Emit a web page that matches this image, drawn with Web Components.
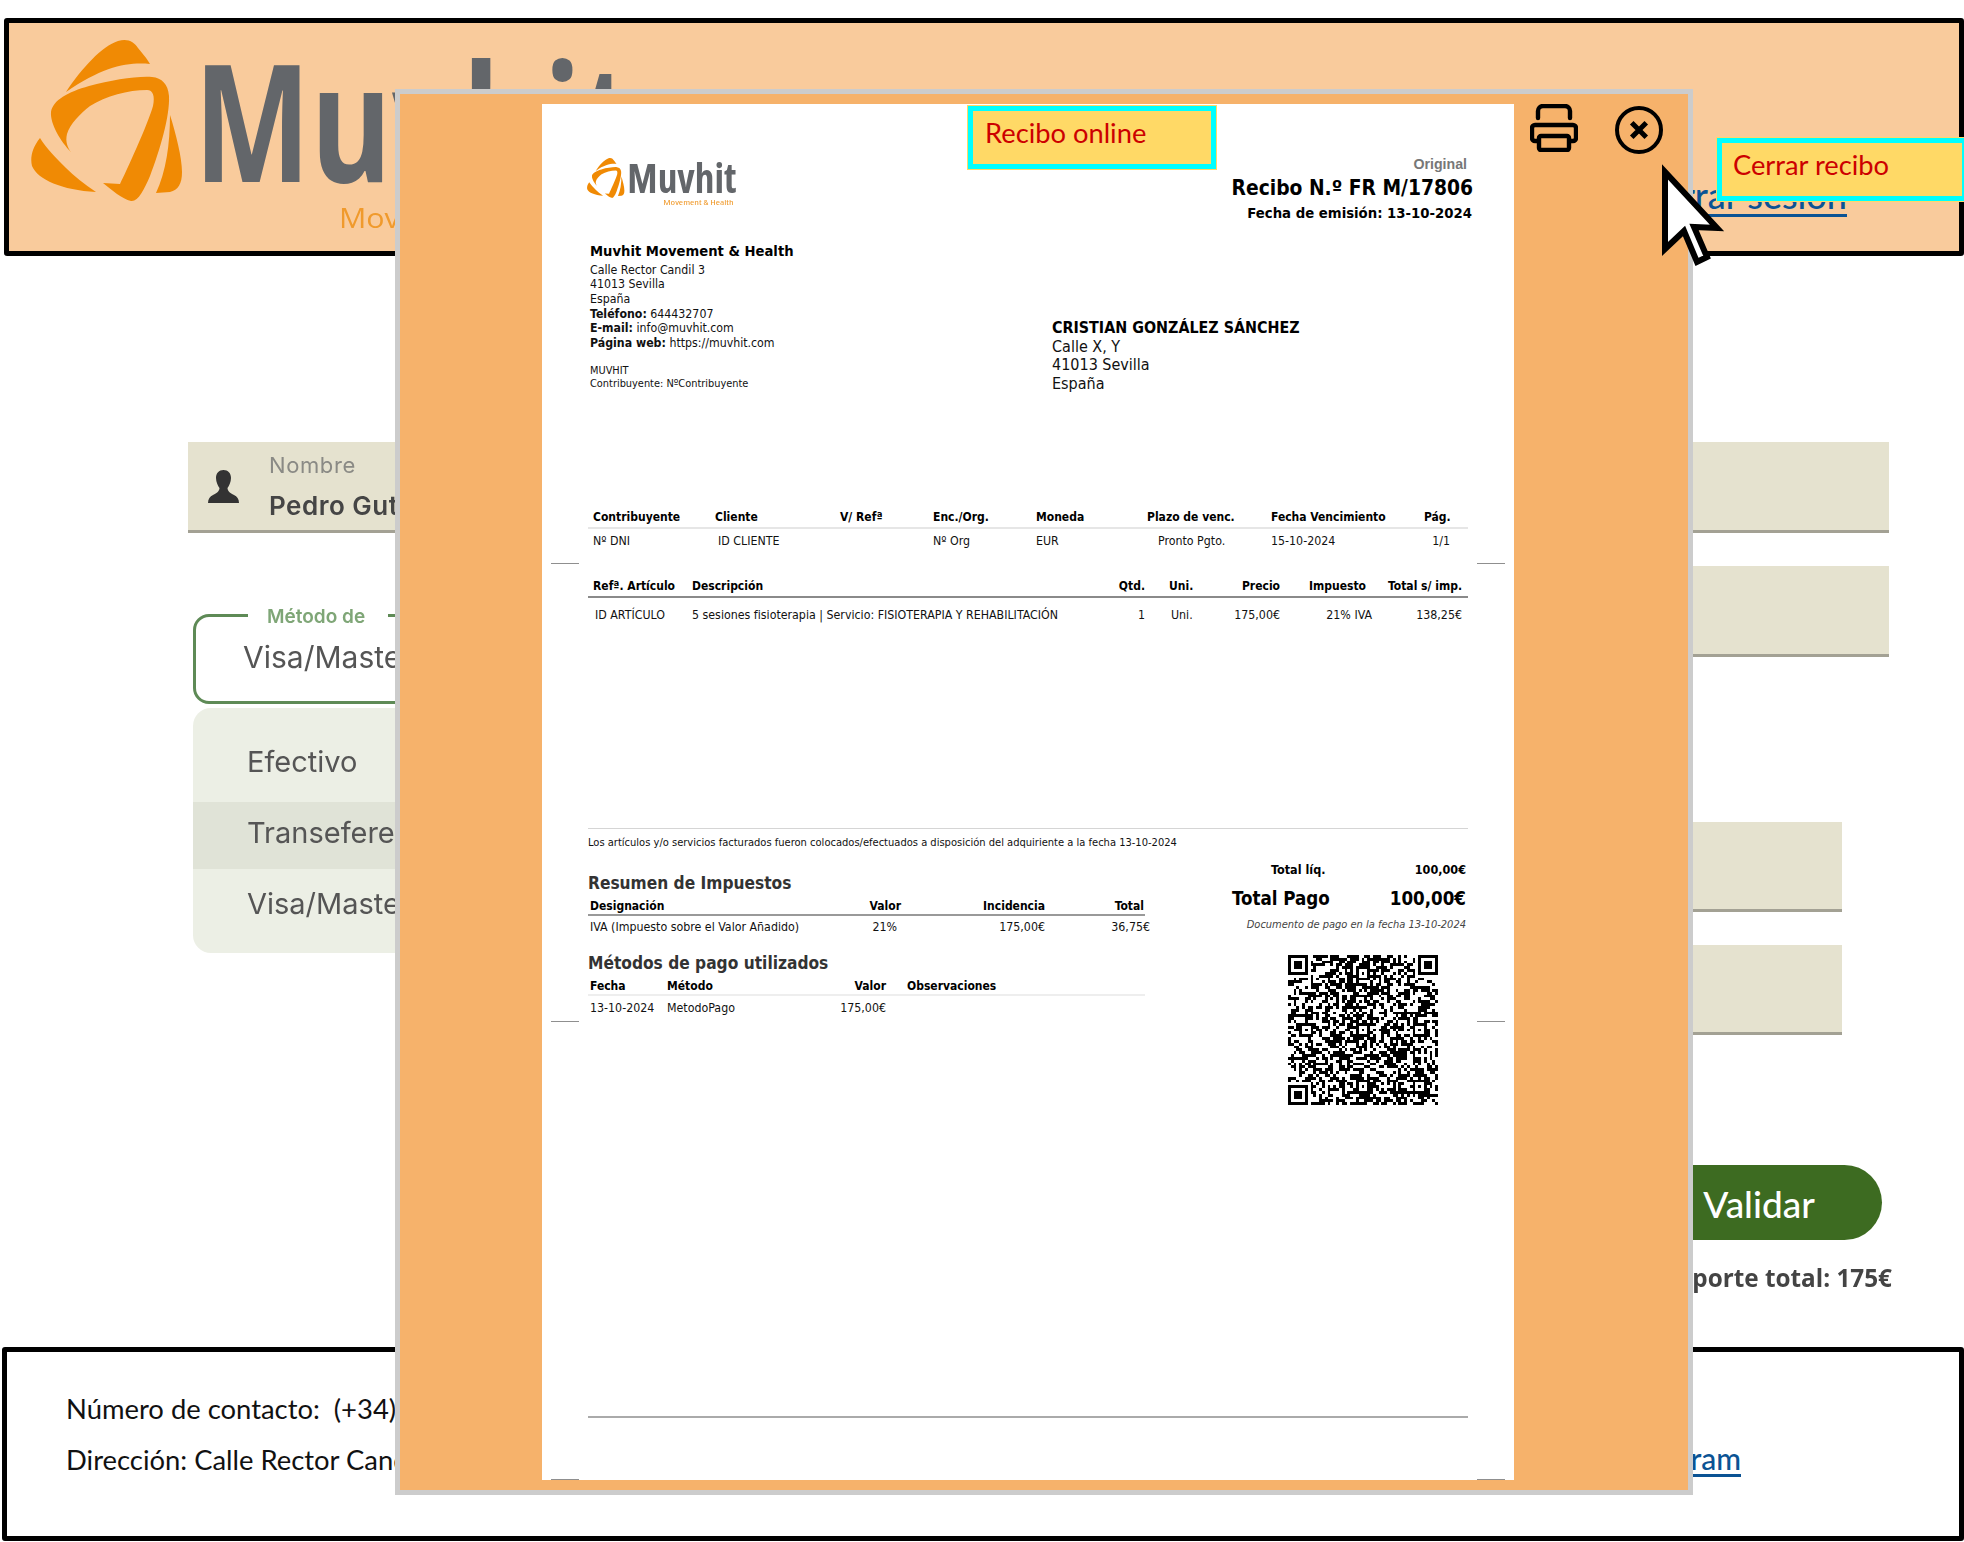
<!DOCTYPE html>
<html lang="es"><head><meta charset="utf-8"><title>Recibo online</title>
<style>html,body{margin:0;padding:0;background:#fff}body{width:1964px;height:1542px;overflow:hidden;font-family:"Lato",sans-serif}</style>
</head><body>
<app-page></app-page>
<script>
function def(name, html, init){
  customElements.define(name, class extends HTMLElement{
    constructor(){super();const r=this.attachShadow({mode:'open'});r.innerHTML=html;if(init)init(r,this);}
  });
}
def('brand-logo',`<style>:host{display:block;line-height:0}svg{display:block;overflow:visible}</style>
<svg part="svg" viewBox="31 40 600 190">
<g fill="#F08A04">
<path d="M66 92C82 68 102 46 118 41C128 38 134 42 138 48C143 54 148 60 150 64C128 62 104 66 66 92Z"/>
<path d="M71 152C61 142 50 124 51 112C53 100 68 92 89 86C112 80 136 76 152 77C162 78 168 84 169 96C170 116 160 150 150 176C144 190 138 202 131 201C122 199 112 190 103 183L120 184C126 172 148 124 153 106C155 96 153 90 147 90C128 90 106 96 90 106C80 114 70 124 67 134C65 142 68 148 71 152Z"/>
<path d="M40 138C32 148 30 158 32 166C38 180 62 190 96 192C84 184 74 176 66 168C56 158 46 148 40 138Z"/>
<path d="M170 115C176 134 182 158 182 172C182 184 178 190 170 192L156 193C166 172 170 144 170 115Z"/>
</g>
<text x="194" y="182" font-family="Open Sans" font-weight="700" font-size="164" textLength="441" lengthAdjust="spacingAndGlyphs" fill="#63666A">Muvhit</text>
<text x="339" y="228" font-family="Open Sans" font-size="28" textLength="284" lengthAdjust="spacingAndGlyphs" fill="#F09A2C">Movement &amp; Health</text>
</svg>`);

def('site-header',`<style>
:host{display:flex;box-sizing:border-box;margin:18px 0 0 4px;height:238px;background:#F9CB9C;border:5px solid #000;border-radius:3px;align-items:flex-start}
brand-logo{width:600px;margin:17px 0 0 22px;filter:blur(.6px)}
a{margin:149px 112px 0 auto;font:500 36px/46px "Lato",sans-serif;color:#0B5394;text-decoration:underline;text-underline-offset:5px}
</style><brand-logo></brand-logo><a>Cerrar sesión</a>`);

def('form-field',`<style>
:host{display:flex;box-sizing:border-box;height:91px;background:#E5E2CF;border-bottom:3px solid #A3A194;align-items:center;filter:blur(.4px)}
</style><slot></slot>`);

def('name-value',`<style>
:host{display:flex;align-items:center;width:100%;font-family:"Inter",sans-serif}
svg{margin-left:20px;width:31px;height:33px;flex:none}
div{margin-left:30px}
p{margin:0}
.l{font:400 22px/24px "Inter",sans-serif;letter-spacing:.6px;color:#8a8a85;margin-top:1px}
.v{font:600 26px/30px "Inter",sans-serif;letter-spacing:.5px;color:#454545;margin-top:14px;white-space:nowrap}
</style>
<svg viewBox="0 0 31 33"><path fill="#333" d="M15.5 0C20 0 23 3 23 8C23 12 21 16 19.5 18C19.5 21 22 23 26 25C29 26.5 31 29 31 33H0C0 29 2 26.5 5 25C9 23 11.5 21 11.5 18C10 16 8 12 8 8C8 3 11 0 15.5 0Z"/></svg>
<div><p class="l"><slot name="label"></slot></p><p class="v"><slot name="value"></slot></p></div>`);

def('method-select',`<style>
:host{display:block;position:relative;margin:81px 0 0 5px;font-family:"Inter",sans-serif;filter:blur(.4px)}
.box{box-sizing:border-box;height:90px;border:3px solid #5E8A56;border-radius:16px;display:flex;align-items:center;padding:0 0 4px 47px;font:400 30px/36px "Inter",sans-serif;color:#555;background:#fff}
.label{position:absolute;left:55px;top:-6px;background:#fff;padding:0 23px 0 19px;font:600 19px/18px "Inter",sans-serif;color:#7FA677;width:98px;white-space:nowrap}
.menu{margin-top:4px;background:#ECEFE5;border-radius:18px;height:245px;box-sizing:border-box;font:400 29px/36px "Inter",sans-serif;color:#555}
.it{display:flex;align-items:center;padding-left:54px;box-sizing:border-box}
.a{height:94px;padding-top:13px}
.s{height:67px;background:#E0E3D7;padding-bottom:6px}
.c{height:64px;padding-top:5px}
</style>
<div class="box">Visa/Mastercard</div><div class="label">Método de</div>
<div class="menu"><div class="it a">Efectivo</div><div class="it s">Transeferencia</div><div class="it c">Visa/Mastercard</div></div>`);

def('primary-button',`<style>
:host{display:flex;box-sizing:border-box;align-items:center;justify-content:center;width:246px;height:75px;padding-top:2px;border-radius:38px;background:#3D6B21;color:#fff;font:500 37px/44px "Lato",sans-serif}
</style><slot></slot>`);

def('site-main',`<style>
:host{display:grid;grid-template-columns:872px 789px;column-gap:40px;box-sizing:border-box;height:1091px;padding:186px 0 0 188px}
.r{display:flex;flex-direction:column;align-items:flex-end}
.r form-field{width:100%}
.r .short{width:742px;margin-right:47px;height:90px}
primary-button{margin:130px 7px 0 0}
.t{margin:23px -3px 0 0;font:700 24.3px/30px "Open Sans",sans-serif;color:#444;filter:blur(.3px)}
</style>
<div class="l"><form-field><name-value><span slot="label">Nombre</span><span slot="value">Pedro Gutiérrez</span></name-value></form-field><method-select></method-select></div>
<div class="r"><form-field></form-field><form-field style="margin-top:33px"></form-field>
<form-field class="short" style="margin-top:165px"></form-field><form-field class="short" style="margin-top:33px"></form-field>
<primary-button>Validar</primary-button><div class="t">Importe total: 175€</div></div>`);

def('site-footer',`<style>
:host{display:flex;box-sizing:border-box;margin:0 0 0 2px;height:194px;background:#fff;border:5px solid #000;border-radius:3px;justify-content:space-between;color:#111}
.c{padding:31px 0 0 59px;font:400 27.4px/51px "Lato",sans-serif;white-space:pre}
a{margin:86px 218px 0 0;font:500 30px/40px "Lato",sans-serif;color:#0B5394;text-decoration:underline;text-underline-offset:4px}
</style><div class="c"><div>Número de contacto:  (+34) 644 43 27 07</div><div>Dirección: Calle Rector Candil 3</div></div><a>Instagram</a>`);

def('note-tip',`<style>
:host{display:block;position:absolute;box-sizing:border-box;background:#FFD966;border:5px solid #0ff;outline:1px solid #FFD966;color:#C00;font:400 27.3px/34px "Lato",sans-serif;white-space:nowrap;z-index:5}
</style><slot></slot>`);

def('qr-code',`<style>:host{display:block;width:150px;height:150px}svg{display:block;width:150px;height:150px}</style><svg viewBox="0 0 53 53" shape-rendering="crispEdges"><path id="p" fill="#000"/></svg>`,(r)=>{
  const N=53,g=[];let s=20241013;
  const rnd=()=>{s=(s+0x6D2B79F5)|0;let t=Math.imul(s^s>>>15,1|s);t=t+Math.imul(t^t>>>7,61|t)^t;return((t^t>>>14)>>>0)/4294967296};
  for(let y=0;y<N;y++){g[y]=[];for(let x=0;x<N;x++)g[y][x]=rnd()<.52?1:0}
  const pat=(cx,cy,o)=>{for(let y=-o-1;y<=o+1;y++)for(let x=-o-1;x<=o+1;x++){const X=cx+x,Y=cy+y;if(X<0||Y<0||X>=N||Y>=N)continue;const d=Math.max(Math.abs(x),Math.abs(y));
    g[Y][X]=o===3?(d===4?0:d===3?1:d===2?0:1):(d===3?g[Y][X]:d===2?1:d===1?0:1)}};
  [[3,3],[49,3],[3,49]].forEach(p=>pat(p[0],p[1],3));
  [[6,26],[26,6],[26,26],[46,26],[26,46],[46,46]].forEach(p=>pat(p[0],p[1],2));
  let d='';for(let y=0;y<N;y++)for(let x=0;x<N;x++)if(g[y][x])d+=`M${x} ${y}h1v1h-1z`;
  r.getElementById('p').setAttribute('d',d);
});

def('receipt-doc',`<style>
:host{display:block;position:relative;box-sizing:border-box;width:972px;height:1376px;background:#fff;flex:none;padding:51px 46px 0;color:#111;font:condensed 12.3px/20px "DejaVu Sans",sans-serif}
*{box-sizing:border-box}
b{font-weight:700}
.head{display:flex;justify-content:space-between;height:87px;margin-left:-1px}
brand-logo{width:148.6px;margin-top:3px;filter:blur(.3px)}
.ttl{text-align:right;margin-right:-5px}
.orig{font:700 14.2px/18px "Liberation Sans",sans-serif;color:#777;padding-right:6px}
.num{font:condensed 700 20.8px/30px "DejaVu Sans",sans-serif;color:#000}
.em{font:condensed 700 14.75px/20px "DejaVu Sans",sans-serif;color:#000;padding-right:1px}
.info{display:flex;height:264px;padding-left:2px}
.co{width:462px;font-size:12.25px;line-height:14.7px}
.co .n{font:condensed 700 14.65px/18px "DejaVu Sans",sans-serif;margin-bottom:2.6px;color:#000}
.co .t{margin-top:13px;font-size:10.9px;line-height:13.5px}
.cu{padding-top:77px;font:condensed 16px/18.7px "DejaVu Sans",sans-serif}
.cu b{font-size:15.9px;color:#000}
.g{display:grid;align-items:center;white-space:nowrap}
.g.h{font-weight:700;color:#000;font-size:12px}
.t1{grid-template-columns:122px 125px 93px 103px 111px 124px 153px 26px;padding-left:5px}
.t1.h{height:23px;border-bottom:2px solid #e6e6e6;line-height:22px}
.t1.v{height:23px}
.t2{grid-template-columns:99px 404px 49px 85px 50px 86px 96px;padding-left:5px}
.t2.h{margin-top:23px;height:23px;border-bottom:2px solid #8a8a8a}
.t2.v{margin-top:7px;height:20px}
.r{text-align:right}
.rule{margin-top:203px;border-top:1.5px solid #d5d5d5;padding-top:4px;font-size:11.05px;line-height:20px;height:25px;white-space:nowrap}
.bot{display:flex;justify-content:space-between;height:555px;margin-top:8px}
.lf{width:557px;padding-top:11px}
h3{margin:0;font:condensed 700 17.2px/22px "DejaVu Sans",sans-serif;color:#333}
.t3{grid-template-columns:250px 61px 144px 99px;padding-left:2px;width:557px;line-height:16px}
.t3.h{margin-top:4px;height:18px;border-bottom:2px solid #999}
.t3.v{margin-top:2px;height:18px}
.t4{grid-template-columns:77px 160px 59px 261px;padding-left:2px;width:557px;line-height:16px}
.t4.h{margin-top:4px;height:18px;border-bottom:2px solid #eee}
.t4.v{margin-top:3px;height:18px}
.ov{margin-right:-6px}
.rg{width:240px;margin-right:2px;position:relative;text-align:right;margin-top:-1px}
.tot{display:flex;justify-content:space-between;padding-left:45px;font-weight:700;color:#000;line-height:20px;font-size:12.5px}
.pg{display:flex;justify-content:space-between;padding-left:6px;font-weight:700;color:#000;margin-top:6px;font-size:18.6px;line-height:26px}
.doc{font-style:italic;color:#444;font-size:11px;line-height:18px;margin-top:4px;white-space:nowrap}
qr-code{margin:21px 0 0 62px}
.end{height:1.5px;background:#aaa}
.m{position:absolute;height:1px;width:28px;background:#8f8f8f}
.m.a{left:9px}.m.b{left:935px}
</style>
<div class="head"><brand-logo></brand-logo><div class="ttl"><div class="orig">Original</div><div class="num">Recibo N.º FR M/17806</div><div class="em">Fecha de emisión: 13-10-2024</div></div></div>
<div class="info"><div class="co"><div class="n">Muvhit Movement &amp; Health</div>Calle Rector Candil 3<br>41013 Sevilla<br>España<br><b>Teléfono:</b> 644432707<br><b>E-mail:</b> info@muvhit.com<br><b>Página web:</b> https://muvhit.com<div class="t">MUVHIT<br>Contribuyente: NºContribuyente</div></div>
<div class="cu"><b>CRISTIAN GONZÁLEZ SÁNCHEZ</b><br>Calle X, Y<br>41013 Sevilla<br>España</div></div>
<div class="g h t1"><span>Contribuyente</span><span>Cliente</span><span>V/ Refª</span><span>Enc./Org.</span><span>Moneda</span><span>Plazo de venc.</span><span>Fecha Vencimiento</span><span>Pág.</span></div>
<div class="g v t1"><span>Nº DNI</span><span style="padding-left:3px">ID CLIENTE</span><span></span><span>Nº Org</span><span>EUR</span><span style="padding-left:11px">Pronto Pgto.</span><span>15-10-2024</span><span class="r">1/1</span></div>
<div class="g h t2"><span>Refª. Artículo</span><span>Descripción</span><span class="r">Qtd.</span><span style="padding-left:24px">Uni.</span><span class="r">Precio</span><span class="r">Impuesto</span><span class="r">Total s/ imp.</span></div>
<div class="g t2 v"><span style="padding-left:2px">ID ARTÍCULO</span><span>5 sesiones fisioterapia | Servicio: FISIOTERAPIA Y REHABILITACIÓN</span><span class="r">1</span><span style="padding-left:26px">Uni.</span><span class="r">175,00€</span><span class="r ov">21% IVA</span><span class="r">138,25€</span></div>
<div class="rule">Los artículos y/o servicios facturados fueron colocados/efectuados a disposición del adquiriente a la fecha 13-10-2024</div>
<div class="bot"><div class="lf"><h3>Resumen de Impuestos</h3>
<div class="g h t3"><span>Designación</span><span class="r">Valor</span><span class="r">Incidencia</span><span class="r">Total</span></div>
<div class="g t3 v"><span>IVA (Impuesto sobre el Valor Añadido)</span><span class="r" style="padding-right:4px">21%</span><span class="r">175,00€</span><span class="r ov">36,75€</span></div>
<h3 style="margin-top:16px">Métodos de pago utilizados</h3>
<div class="g h t4"><span>Fecha</span><span>Método</span><span class="r">Valor</span><span style="padding-left:21px">Observaciones</span></div>
<div class="g t4 v"><span>13-10-2024</span><span>MetodoPago</span><span class="r">175,00€</span><span></span></div>
</div>
<div class="rg"><div class="tot"><span>Total líq.</span><span>100,00€</span></div><div class="pg"><span>Total Pago</span><span>100,00€</span></div><div class="doc">Documento de pago en la fecha 13-10-2024</div><qr-code></qr-code></div></div>
<div class="end"></div>
<i class="m a" style="top:459px"></i><i class="m b" style="top:459px"></i><i class="m a" style="top:917px"></i><i class="m b" style="top:917px"></i><i class="m a" style="top:1375px"></i><i class="m b" style="top:1375px"></i>
`);

def('receipt-modal',`<style>
:host{position:absolute;left:395px;top:89px;width:1298px;height:1406px;box-sizing:border-box;border:5px solid #CCC;background:#F6B26B;display:flex;padding:10px 0 0 142px;z-index:3}
.ic{display:flex;align-items:flex-start;gap:37px;margin-left:16px}
svg{display:block;flex:none}
</style>
<receipt-doc></receipt-doc>
<div class="ic">
<svg width="48" height="48" viewBox="0 0 48 48" fill="none" stroke="#000" stroke-width="4.4" stroke-linejoin="round" stroke-linecap="round"><path d="M8 14V7a5 5 0 0 1 5-5H35a5 5 0 0 1 5 5v7"/><path d="M7 37H5a3 3 0 0 1-3-3V24a3 3 0 0 1 3-3H43a3 3 0 0 1 3 3V34a3 3 0 0 1-3 3h-2"/><rect x="9" y="32" width="30" height="14" rx="2"/></svg>
<svg style="margin-top:2px" width="48" height="48" viewBox="0 0 48 48" fill="none" stroke="#000"><circle cx="24" cy="24" r="22" stroke-width="4"/><path d="M18.5 18.5L29.5 29.5M29.5 18.5L18.5 29.5" stroke-width="5" stroke-linecap="square"/></svg>
</div>`);

def('mouse-cursor',`<style>:host{position:absolute;left:1655px;top:158px;z-index:6;width:76px;height:114px}svg{display:block}</style>
<svg width="76" height="114" viewBox="0 0 76 114"><path d="M10 14V91L29 73L42 104L52 99L39 69L62 70Z" fill="#fff" stroke="#000" stroke-width="6" stroke-linejoin="miter"/></svg>`);

def('app-page',`<style>:host{display:block;position:relative;width:1964px;height:1542px;overflow:hidden}</style>
<site-header></site-header><site-main></site-main><site-footer></site-footer>
<receipt-modal></receipt-modal>
<note-tip style="left:968px;top:106px;width:248px;height:63px;padding:5px 0 0 12px">Recibo online</note-tip>
<note-tip style="left:1717px;top:138px;width:250px;height:63px;padding:5px 0 0 11px">Cerrar recibo</note-tip>
<mouse-cursor></mouse-cursor>`);
</script>
</body></html>
